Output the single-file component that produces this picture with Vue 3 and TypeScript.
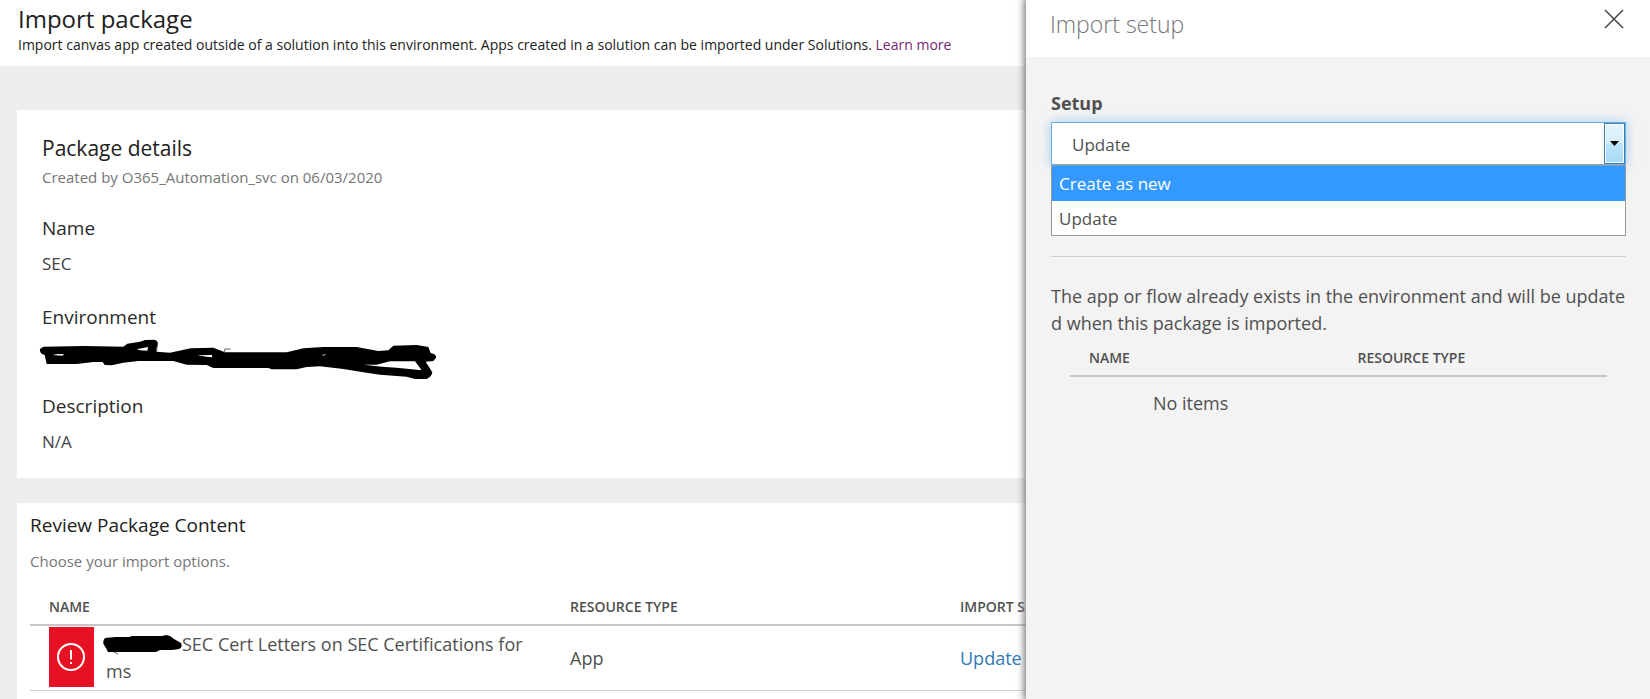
<script setup lang="ts">
import { ref } from 'vue'

interface PackageItem {
  name: string
  type: string
  action: string
}

const items: PackageItem[] = [
  { name: 'SEC Cert Letters on SEC Certifications forms', type: 'App', action: 'Update' },
]
const options = ['Create as new', 'Update']
const selected = ref('Update')
const highlighted = ref(0)

function choose(index: number) {
  highlighted.value = index
  selected.value = options[index]
}
</script>

<template>
  <div class="page">
    <header class="top">
      <h1>Import package</h1>
      <p>
        Import canvas app created outside of a solution into this environment. Apps created in a
        solution can be imported under Solutions. <a href="#learn">Learn more</a>
      </p>
    </header>

    <main class="content">
      <section class="card details">
        <h2>Package details</h2>
        <p class="meta">Created by O365_Automation_svc on 06/03/2020</p>
        <dl>
          <dt>Name</dt>
          <dd>SEC</dd>
          <dt>Environment</dt>
          <dd>
            <svg class="scribble" viewBox="0 0 1260 180" aria-label="Hidden environment name">
              <path d="M40 47L165 45L280 47L292 38L330 32L345 27L372 26Q386 28 383 42L380 62L420 65L482 52L550 50L585 64L770 64L820 52L880 48L980 48L1045 60L1075 58L1090 44L1160 42L1195 48L1202 66Q1220 70 1218 80L1210 90L1187 92L1207 124Q1206 136 1190 144L1155 144L1130 137L1050 131L1000 124L940 114L870 106L830 108L800 115L725 115L715 111L550 111L530 102L470 101L430 90L325 90L280 95L245 103L224 102L218 93L190 93L140 99L50 99L44 72Q28 68 30 54Z" />
              <path class="gap" d="M320 55L354 48L352 59L330 58ZM502 73L546 72L546 79L530 77ZM68 72L82 69L102 70L98 74ZM876 72L890 69L880 74ZM1002 101L1040 101L1080 91L1155 91L1175 118L1100 110L1055 107Z" />
              <path class="hint" d="M584 64V54H602M380 48V62" />
            </svg>
          </dd>
          <dt>Description</dt>
          <dd>N/A</dd>
        </dl>
      </section>

      <section class="card review">
        <h3>Review Package Content</h3>
        <p class="meta">Choose your import options.</p>
        <table class="grid">
          <thead>
            <tr>
              <th class="c-name">Name</th>
              <th class="c-type">Resource type</th>
              <th>Import setup</th>
            </tr>
          </thead>
          <tbody>
            <tr v-for="item in items" :key="item.name">
              <td>
                <div class="item">
                  <span class="alert">
                    <svg viewBox="0 0 30 30" width="30" height="30" aria-label="Action needed">
                      <circle cx="15" cy="15" r="13" />
                      <path d="M15 8V17.500M15 20V22" />
                    </svg>
                  </span>
                  <span class="item-name"><svg class="strike" viewBox="0 0 80 18" aria-label="Hidden prefix"><path d="M3 3L14 2L27 2L30 1L60 1L64 0L68 1L72 4L79 8Q81 12 77 14L70 15L58 15L54 17L6 17L4 13Q-1 7 3 3Z" /><path class="tail" d="M12 17L16 19" /></svg>{{ item.name }}</span>
                </div>
              </td>
              <td>{{ item.type }}</td>
              <td><a href="#setup">{{ item.action }}</a></td>
            </tr>
          </tbody>
        </table>
      </section>
    </main>

    <aside class="panel">
      <div class="panel-head">
        <h2>Import setup</h2>
        <button type="button" class="close" aria-label="Close">
          <svg viewBox="0 0 20 20" width="20" height="20"><path d="M1 1L19 19M19 1L1 19" /></svg>
        </button>
      </div>
      <div class="panel-body">
        <label for="setup">Setup</label>
        <div class="combo">
          <select id="setup" v-model="selected">
            <option v-for="o in options" :key="o">{{ o }}</option>
          </select>
          <span class="drop" aria-hidden="true">
            <svg viewBox="0 0 9 5" width="9" height="5"><path d="M0 0H9L4.500 5Z" /></svg>
          </span>
          <ul class="list" role="listbox" aria-label="Setup options">
            <li
              v-for="(o, i) in options"
              :key="o"
              role="option"
              :aria-selected="i === highlighted"
              :class="{ active: i === highlighted }"
              @click="choose(i)"
            >
              {{ o }}
            </li>
          </ul>
        </div>
        <hr />
        <p class="note">
          The app or flow already exists in the environment and will be update<br />d when this
          package is imported.
        </p>
        <table class="grid small">
          <thead>
            <tr>
              <th class="half">Name</th>
              <th>Resource type</th>
            </tr>
          </thead>
          <tbody>
            <tr>
              <td colspan="2" class="empty">No items</td>
            </tr>
          </tbody>
        </table>
      </div>
    </aside>
  </div>
</template>

<style>
html,
body {
  margin: 0;
  height: 100%;
  overflow: hidden;
}
</style>

<style scoped>
* {
  box-sizing: border-box;
}
.page {
  position: relative;
  height: 100vh;
  overflow: hidden;
  background: #eee;
  color: #505050;
  font-family: 'Segoe UI', 'Open Sans', 'Noto Sans', sans-serif;
  font-size: 18px;
  line-height: 27px;
}
h1,
h2,
h3,
p,
dl,
dd,
ul {
  margin: 0;
  padding: 0;
  font-weight: 400;
}
.top {
  height: 66px;
  padding: 3px 18px 0;
  background: #fff;
  color: #212121;
}
.top h1 {
  font-size: 24px;
  line-height: 32px;
}
.top p {
  font-size: 14px;
  line-height: 20px;
  white-space: nowrap;
}
.top a {
  color: #742774;
  text-decoration: none;
}
.content {
  display: flex;
  flex-direction: column;
  gap: 25px;
  padding: 44px 17px 0;
}
.card {
  background: #fff;
}
.details {
  padding: 22px 25px;
}
.details h2 {
  color: #212121;
  font-size: 21px;
  line-height: 32px;
}
.meta {
  color: #767676;
  font-size: 15px;
}
dt {
  margin-top: 26px;
  color: #2b2b2b;
  font-size: 19px;
  line-height: 27px;
}
.meta + dl dt:first-child {
  margin-top: 24px;
}
dd {
  height: 36px;
  padding-top: 8px;
  color: #444;
  font-size: 17px;
}
.scribble {
  display: block;
  width: 420px;
  height: 60px;
  margin: -8px 0 0 -12px;
}
.gap {
  fill: #fff;
}
.hint {
  fill: none;
  stroke: #667;
  stroke-width: 3;
}
.review {
  padding: 9px 13px 20px;
}
.review h3 {
  color: #212121;
  font-size: 19px;
}
.review .meta {
  margin-top: 9px;
}
.grid {
  width: 100%;
  border-collapse: collapse;
  table-layout: fixed;
}
.grid th {
  height: 36px;
  padding: 0 19px;
  border-bottom: 2px solid #c6c6c6;
  color: #505050;
  font-size: 14px;
  font-weight: 600;
  line-height: 20px;
  text-align: left;
  text-transform: uppercase;
}
.grid td {
  padding: 0 19px;
  border-bottom: 1px solid #d0d0d0;
}
.review .grid {
  margin-top: 14px;
}
.c-name {
  width: 521px;
}
.c-type {
  width: 390px;
}
.grid a {
  color: #337ab7;
  text-decoration: none;
}
.item {
  display: flex;
  align-items: center;
  gap: 12px;
  height: 64px;
}
.alert {
  display: flex;
  flex: none;
  align-items: center;
  justify-content: center;
  width: 45px;
  height: 60px;
  margin-bottom: 2px;
  padding-right: 2px;
  background: #e81123;
}
.alert svg {
  fill: none;
  stroke: #fff;
  stroke-width: 2;
}
.item-name {
  padding-right: 4px;
  word-break: break-all;
}
.strike {
  width: 80px;
  height: 18px;
  margin-left: -4px;
  overflow: visible;
  vertical-align: -2px;
}
.tail {
  stroke: #555;
}
.panel {
  position: absolute;
  top: 0;
  right: 0;
  bottom: 0;
  width: 624px;
  background: #f3f3f3;
  box-shadow: 0 0 7px 2px #777;
}
.panel-head {
  display: flex;
  justify-content: space-between;
  height: 57px;
  padding: 8px 26px 0 24px;
  background: #fff;
}
.panel-head h2 {
  color: #767676;
  font-size: 23px;
  font-weight: 300;
  line-height: 32px;
}
.close {
  width: 20px;
  height: 20px;
  margin: 1px 0 0;
  padding: 0;
  border: 0;
  background: none;
}
.close svg {
  display: block;
  fill: none;
  stroke: #444;
  stroke-width: 1.500;
}
.panel-body {
  padding: 33px 24px 0 25px;
}
label {
  display: block;
  height: 32px;
  font-weight: 700;
}
.combo {
  position: relative;
  height: 43px;
  font-size: 17px;
}
select {
  width: 100%;
  height: 43px;
  padding: 2px 20px 0;
  border: 1px solid #66afe9;
  border-radius: 0;
  outline: none;
  background: #fff;
  color: #505050;
  font: inherit;
  appearance: none;
  box-shadow: 0 0 10px rgba(102, 175, 233, 0.6);
}
.drop {
  position: absolute;
  top: 1px;
  right: 1px;
  bottom: 1px;
  display: flex;
  align-items: center;
  justify-content: center;
  width: 21px;
  border: 1px solid #3c7fb1;
  background: linear-gradient(#e3f4fc, #d6eefb 48%, #bde6fd 50%, #a7d9f5);
  box-shadow: inset 0 0 0 1px #fff;
  pointer-events: none;
}
.list {
  position: absolute;
  top: 43px;
  right: 0;
  left: 0;
  height: 71px;
  border: 1px solid #999;
  background: #fff;
  list-style: none;
}
.list li {
  height: 35px;
  padding-left: 7px;
  line-height: 36px;
}
.list .active {
  background: #3399ff;
  color: #fff;
}
hr {
  margin: 91px 0 0;
  border: 0;
  border-top: 1px solid #d0d0d0;
}
.note {
  margin-top: 26px;
  white-space: nowrap;
}
.grid.small {
  width: auto;
  min-width: 537px;
  margin: 3px 19px 0;
}
.half {
  width: 50%;
}
.grid .empty {
  padding: 13px 83px;
  border: 0;
}
</style>
